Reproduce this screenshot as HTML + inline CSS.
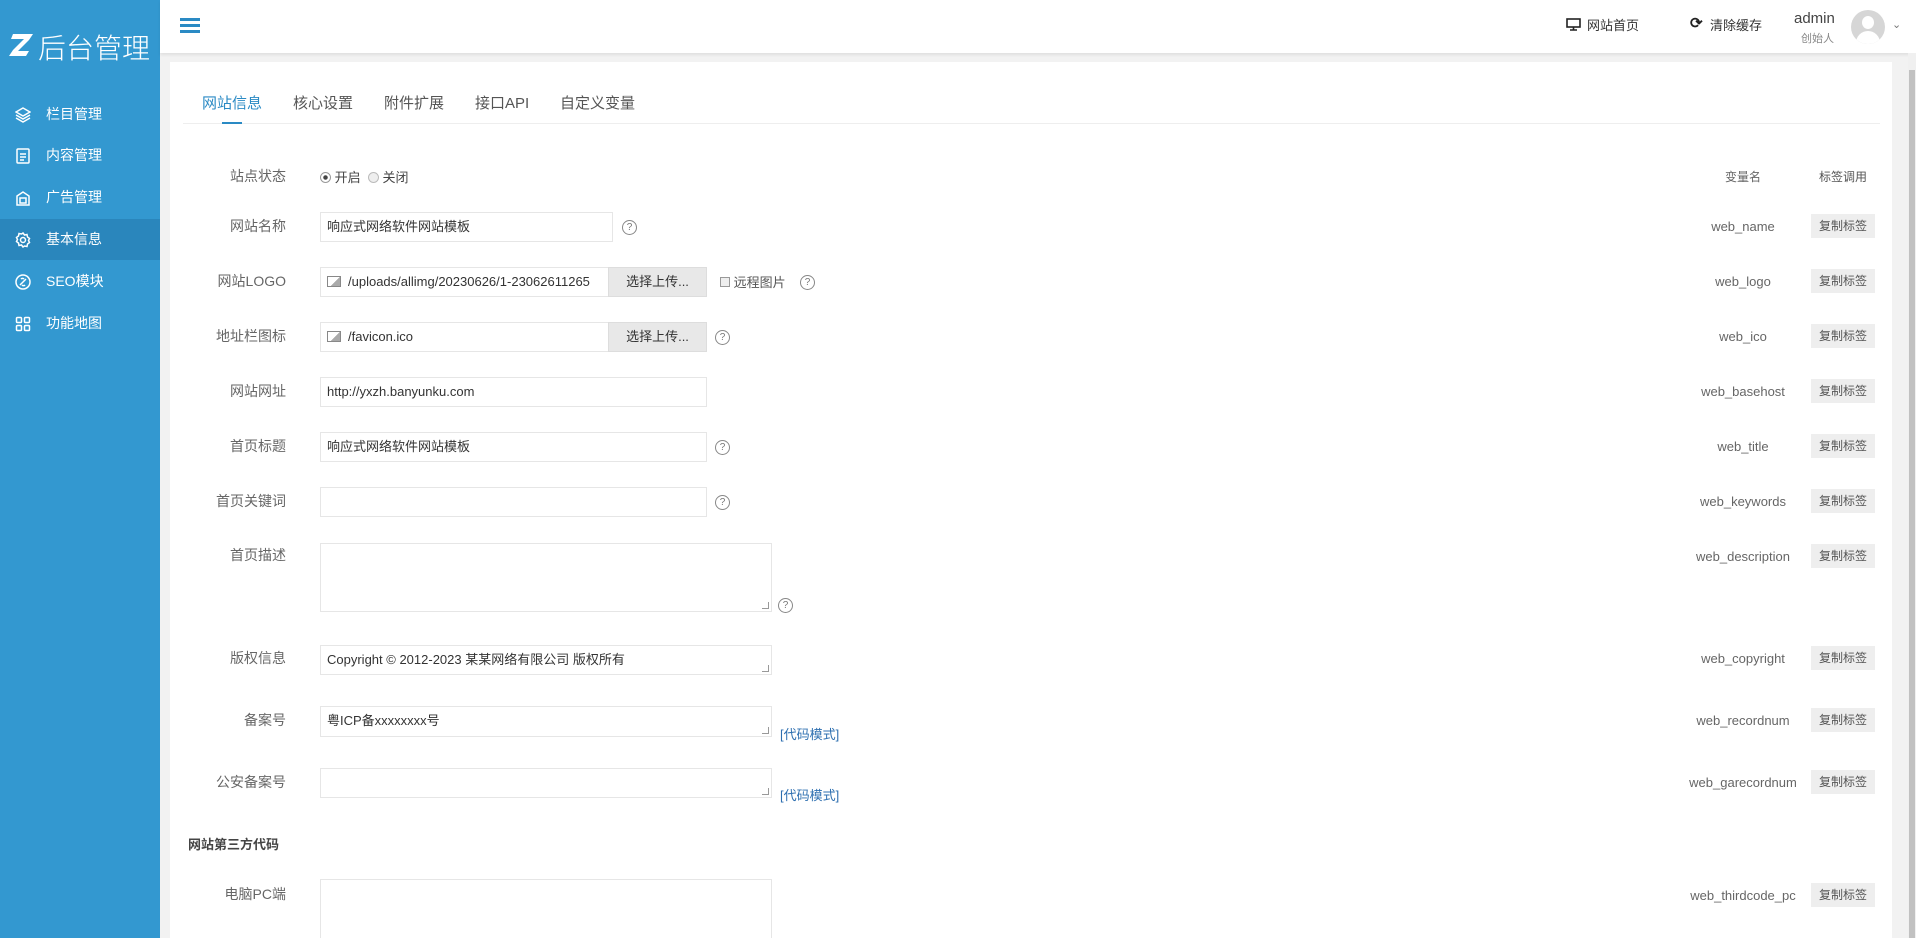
<!DOCTYPE html>
<html style="overflow:hidden;width:1916px;height:938px"><head><meta charset="utf-8"><style>
*{margin:0;padding:0;box-sizing:border-box}
html,body{width:1916px;height:938px;overflow:hidden}
body{background:#f2f2f2;font-family:"Liberation Sans","Noto Sans CJK SC",sans-serif;color:#555;font-size:14px}
#wrap{position:relative;width:1916px;height:938px;overflow:hidden}
.abs{position:absolute}
#side{left:0;top:0;width:160px;height:938px;background:#3398d0}
.mi{position:absolute;left:0;width:160px;height:41px;color:#fff;font-size:14px;line-height:41px;padding-left:46px}
.mi svg{position:absolute;left:15px;top:13px}
#hdr{left:160px;top:0;width:1756px;height:53px;background:#fff;box-shadow:0 2px 3px rgba(0,0,0,.08)}
#panel{left:170px;top:62px;width:1722px;height:876px;background:#fff}
.tab{position:absolute;top:92px;font-size:15px;color:#555}
.lbl{position:absolute;width:120px;left:166px;text-align:right;font-size:14px;color:#666}
.inp{position:absolute;left:320px;height:30px;border:1px solid #e6e6e6;font-size:13px;color:#333;line-height:28px;padding-left:6px;white-space:nowrap;overflow:hidden}
.btn{position:absolute;height:30px;background:#e8e8e8;border:1px solid #ddd;font-size:13px;color:#333;text-align:center;line-height:28px}
.q{position:absolute;width:15px;height:15px;border:1px solid #888;border-radius:50%;font-size:10px;line-height:13px;text-align:center;color:#777}
.var{position:absolute;width:160px;left:1663px;text-align:center;font-size:13px;color:#666}
.cp{position:absolute;left:1811px;width:64px;height:24px;background:#eee;font-size:12px;color:#555;text-align:center;line-height:24px}
.ta{position:absolute;left:320px;width:452px;border:1px solid #e6e6e6;font-size:13px;color:#333;padding:4px 6px}
.rz{position:absolute;right:2px;bottom:2px;width:7px;height:7px;border-bottom:1px solid #999;border-right:1px solid #999}
.code{position:absolute;left:780px;font-size:13px;color:#2e6fb0}
.img{display:inline-block;width:14px;height:11px;border:1px solid #888;margin-right:7px;vertical-align:-1px;background:linear-gradient(135deg,transparent 55%,#aaa 56%)}
</style></head><body><div id="wrap">
<div id="side" class="abs">
 <svg class="abs" style="left:9px;top:33px" width="24" height="24" viewBox="0 0 24 24"><path d="M4 1h20l-4 6L9 18h11l-3 5H0l4-6L15 6H2z" fill="#fff"/></svg>
 <div class="abs" style="left:38px;top:27px;color:#fff;font-size:28px;font-weight:300">后台管理</div>
 <div class="mi" style="top:94px"><svg width="16" height="16" viewBox="0 0 16 16" fill="none" stroke="#fff" stroke-width="1.5"><path d="M8 1l7 4-7 4-7-4z"/><path d="M1 8l7 4 7-4"/><path d="M1 11l7 4 7-4"/></svg>栏目管理</div>
 <div class="mi" style="top:135px"><svg width="16" height="16" viewBox="0 0 16 16" fill="none" stroke="#fff" stroke-width="1.5"><rect x="2" y="1" width="12" height="14" rx="1"/><path d="M5 6h6M5 9h6M5 12h4"/></svg>内容管理</div>
 <div class="mi" style="top:177px"><svg width="16" height="16" viewBox="0 0 16 16" fill="none" stroke="#fff" stroke-width="1.5"><path d="M2 6l6-4 6 4v9H2z"/><rect x="5" y="8" width="6" height="5"/></svg>广告管理</div>
 <div class="mi" style="top:219px;background:#2a86bc"><svg width="16" height="16" viewBox="0 0 16 16" fill="none" stroke="#fff" stroke-width="1.5"><circle cx="8" cy="8" r="2.5"/><path d="M8 1l1.5 2 2.5-.5.5 2.5 2 1.5-1 2 1 2-2 1.5-.5 2.5-2.5-.5L8 15l-1.5-2-2.5.5-.5-2.5-2-1.5 1-2-1-2 2-1.5.5-2.5 2.5.5z"/></svg>基本信息</div>
 <div class="mi" style="top:261px"><svg width="16" height="16" viewBox="0 0 16 16" fill="none" stroke="#fff" stroke-width="1.5"><circle cx="8" cy="8" r="7"/><path d="M5 11l6-6M6 5a2 2 0 0 1 3 0M10 11a2 2 0 0 1-3 0"/></svg>SEO模块</div>
 <div class="mi" style="top:303px"><svg width="16" height="16" viewBox="0 0 16 16" fill="none" stroke="#fff" stroke-width="1.5"><rect x="1.5" y="1.5" width="5" height="5" rx="1"/><rect x="9.5" y="1.5" width="5" height="5" rx="1"/><rect x="1.5" y="9.5" width="5" height="5" rx="1"/><rect x="9.5" y="9.5" width="5" height="5" rx="1"/></svg>功能地图</div>
</div>
<div id="hdr" class="abs">
 <div class="abs" style="left:20px;top:18px;width:20px;height:3px;background:#2a8ac4;box-shadow:0 6px 0 #2a8ac4,0 12px 0 #2a8ac4"></div>
 <svg class="abs" style="left:1406px;top:18px" width="15" height="13" viewBox="0 0 15 13"><rect x="1" y="1" width="13" height="8" fill="none" stroke="#222" stroke-width="1.6"/><path d="M4 12h7M7.5 9v3" stroke="#222" stroke-width="1.6"/></svg>
 <div class="abs" style="left:1427px;top:15px;font-size:13px;color:#333">网站首页</div>
 <div class="abs" style="left:1530px;top:14px;font-size:15px;color:#222;font-weight:bold">⟳</div>
 <div class="abs" style="left:1550px;top:15px;font-size:13px;color:#333">清除缓存</div>
 <div class="abs" style="left:1634px;top:10px;font-size:15px;color:#444">admin</div>
 <div class="abs" style="left:1641px;top:30px;font-size:11px;color:#888">创始人</div>
 <div class="abs" style="left:1691px;top:10px;width:34px;height:34px;border-radius:50%;background:#d6d6d6;overflow:hidden">
  <div class="abs" style="left:11px;top:6px;width:12px;height:13px;border-radius:50%;background:#fff"></div>
  <div class="abs" style="left:5px;top:21px;width:24px;height:16px;border-radius:12px 12px 0 0;background:#fff"></div>
 </div>
 <div class="abs" style="left:1732px;top:18px;font-size:11px;color:#777">⌄</div>
</div>
<div id="panel" class="abs"></div>
<div class="abs" style="left:1908px;top:53px;width:8px;height:885px;background:#f0f0f0"></div>
<div class="abs" style="left:1909px;top:70px;width:6px;height:868px;background:#c1c1c1"></div>

<div class="tab" style="left:202px;color:#2a8ac4">网站信息</div>
<div class="tab" style="left:293px">核心设置</div>
<div class="tab" style="left:384px">附件扩展</div>
<div class="tab" style="left:475px">接口API</div>
<div class="tab" style="left:560px">自定义变量</div>
<div class="abs" style="left:183px;top:123px;width:1697px;height:1px;background:#eee"></div>
<div class="abs" style="left:222px;top:122px;width:20px;height:2px;background:#2a8ac4"></div>

<div class="lbl" style="top:166px">站点状态</div>
<div class="abs" style="left:320px;top:167px;font-size:13px;color:#444"><span style="display:inline-block;width:11px;height:11px;border:1px solid #999;border-radius:50%;vertical-align:-1px;background:radial-gradient(#444 30%,#fff 40%)"></span> 开启 &nbsp;<span style="display:inline-block;width:11px;height:11px;border:1px solid #bbb;border-radius:50%;vertical-align:-1px;background:#eee"></span> 关闭</div>
<div class="var" style="top:168px;font-size:12px">变量名</div>
<div class="abs" style="left:1811px;top:168px;width:64px;text-align:center;font-size:12px;color:#555">标签调用</div>

<div class="lbl" style="top:216px">网站名称</div>
<div class="inp" style="top:212px;width:293px">响应式网络软件网站模板</div>
<div class="q" style="left:622px;top:220px">?</div>
<div class="var" style="top:219px">web_name</div><div class="cp" style="top:214px">复制标签</div>

<div class="lbl" style="top:271px">网站LOGO</div>
<div class="inp" style="top:267px;width:290px"><span class="img"></span>/uploads/allimg/20230626/1-23062611265</div>
<div class="btn" style="left:608px;top:267px;width:99px">选择上传...</div>
<div class="abs" style="left:720px;top:272px;font-size:13px;color:#555"><span style="display:inline-block;width:10px;height:10px;border:1px solid #999;background:#eee;vertical-align:0"></span> 远程图片</div>
<div class="q" style="left:800px;top:275px">?</div>
<div class="var" style="top:274px">web_logo</div><div class="cp" style="top:269px">复制标签</div>

<div class="lbl" style="top:326px">地址栏图标</div>
<div class="inp" style="top:322px;width:290px"><span class="img"></span>/favicon.ico</div>
<div class="btn" style="left:608px;top:322px;width:99px">选择上传...</div>
<div class="q" style="left:715px;top:330px">?</div>
<div class="var" style="top:329px">web_ico</div><div class="cp" style="top:324px">复制标签</div>

<div class="lbl" style="top:381px">网站网址</div>
<div class="inp" style="top:377px;width:387px">http://yxzh.banyunku.com</div>
<div class="var" style="top:384px">web_basehost</div><div class="cp" style="top:379px">复制标签</div>

<div class="lbl" style="top:436px">首页标题</div>
<div class="inp" style="top:432px;width:387px">响应式网络软件网站模板</div>
<div class="q" style="left:715px;top:440px">?</div>
<div class="var" style="top:439px">web_title</div><div class="cp" style="top:434px">复制标签</div>

<div class="lbl" style="top:491px">首页关键词</div>
<div class="inp" style="top:487px;width:387px"></div>
<div class="q" style="left:715px;top:495px">?</div>
<div class="var" style="top:494px">web_keywords</div><div class="cp" style="top:489px">复制标签</div>

<div class="lbl" style="top:545px">首页描述</div>
<div class="ta" style="top:543px;height:69px"><div class="rz"></div></div>
<div class="q" style="left:778px;top:598px">?</div>
<div class="var" style="top:549px">web_description</div><div class="cp" style="top:544px">复制标签</div>

<div class="lbl" style="top:648px">版权信息</div>
<div class="ta" style="top:645px;height:30px;line-height:20px">Copyright © 2012-2023 某某网络有限公司 版权所有<div class="rz"></div></div>
<div class="var" style="top:651px">web_copyright</div><div class="cp" style="top:646px">复制标签</div>

<div class="lbl" style="top:710px">备案号</div>
<div class="ta" style="top:706px;height:31px;line-height:20px">粤ICP备xxxxxxxx号<div class="rz"></div></div>
<div class="code" style="top:724px">[代码模式]</div>
<div class="var" style="top:713px">web_recordnum</div><div class="cp" style="top:708px">复制标签</div>

<div class="lbl" style="top:772px">公安备案号</div>
<div class="ta" style="top:768px;height:30px"><div class="rz"></div></div>
<div class="code" style="top:785px">[代码模式]</div>
<div class="var" style="top:775px">web_garecordnum</div><div class="cp" style="top:770px">复制标签</div>

<div class="abs" style="left:188px;top:834px;font-size:13px;color:#444;font-weight:bold">网站第三方代码</div>

<div class="lbl" style="top:884px">电脑PC端</div>
<div class="ta" style="top:879px;height:59px;border-bottom:none"></div>
<div class="var" style="top:888px">web_thirdcode_pc</div><div class="cp" style="top:883px">复制标签</div>
</div></body></html>
